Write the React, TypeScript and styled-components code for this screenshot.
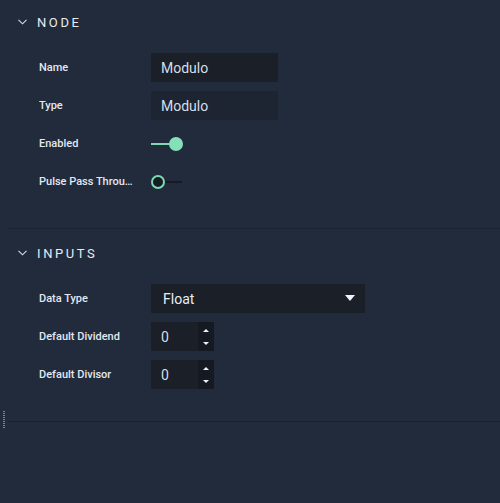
import React from "react";
import styled, { createGlobalStyle } from "styled-components";

const Global = createGlobalStyle`
  html, body { margin: 0; padding: 0; background: #222b3b; }
  body { font-family: Roboto, "Liberation Sans", sans-serif; color: #dfe5ee; }
  * { box-sizing: border-box; }
`;

const Panel = styled.div`
  width: 500px;
  height: 503px;
  background: #222b3b;
  position: relative;
  overflow: hidden;
`;

const Section = styled.section`
  padding-bottom: 32px;
  margin-left: 7px;
  border-bottom: 1px solid #1a2130;
`;

const Header = styled.div<{ $top: number }>`
  display: flex;
  align-items: center;
  height: 16px;
  margin-top: ${(p) => p.$top}px;
  margin-bottom: 23px;
  padding-left: 11px;
  gap: 10px;
`;

const HeaderText = styled.span`
  font-size: 13px;
  font-weight: 400;
  letter-spacing: 2.6px;
  color: #e6ebf2;
`;

const Rows = styled.div`
  display: flex;
  flex-direction: column;
  gap: 9px;
`;

const Row = styled.div`
  display: grid;
  grid-template-columns: 112px 1fr;
  align-items: center;
  height: 29px;
  padding-left: 32px;
`;

const Label = styled.span`
  font-size: 11px;
  font-weight: 500;
  color: #e2e8f0;
  white-space: nowrap;
  overflow: hidden;
  text-overflow: ellipsis;
  max-width: 95px;
`;

const TextBox = styled.div<{ $readonly?: boolean }>`
  width: 127px;
  height: 29px;
  background: ${(p) => (p.$readonly ? "#1e2532" : "#1a1f28")};
  display: flex;
  align-items: center;
  padding-left: 10px;
  font-size: 14px;
  color: #d6deea;
`;

const Toggle = styled.div`
  position: relative;
  width: 32px;
  height: 14px;
`;

const Track = styled.div<{ $on: boolean }>`
  position: absolute;
  left: 0;
  top: 6px;
  width: 31px;
  height: 2px;
  background: ${(p) => (p.$on ? "#7ed9b3" : "#151b25")};
`;

const Knob = styled.div<{ $on: boolean }>`
  position: absolute;
  top: 0;
  left: ${(p) => (p.$on ? "18px" : "0px")};
  width: 14px;
  height: 14px;
  border-radius: 50%;
  background: ${(p) => (p.$on ? "#84e0b9" : "#161c26")};
  border: ${(p) => (p.$on ? "none" : "2px solid #7ed9b3")};
`;

const Select = styled.div`
  width: 214px;
  height: 29px;
  background: #1a1f28;
  display: flex;
  align-items: center;
  justify-content: space-between;
  padding: 0 10px 0 12px;
  font-size: 14px;
  color: #e8edf4;
`;

const Caret = styled.span`
  width: 0;
  height: 0;
  border-left: 5px solid transparent;
  border-right: 5px solid transparent;
  border-top: 6px solid #f2f4f8;
  margin-top: -1px;
`;

const NumBox = styled.div`
  width: 63px;
  height: 29px;
  background: #1a1f28;
  display: flex;
  align-items: stretch;
`;

const NumValue = styled.div`
  flex: 1;
  display: flex;
  align-items: center;
  padding-left: 10px;
  font-size: 14px;
  color: #d6deea;
`;

const Spinner = styled.div`
  width: 16px;
  background: #151a22;
  display: flex;
  flex-direction: column;
  align-items: center;
  justify-content: center;
  gap: 10px;
`;

const Arrow = styled.span<{ $up?: boolean }>`
  width: 0;
  height: 0;
  border-left: 3px solid transparent;
  border-right: 3px solid transparent;
  ${(p) =>
    p.$up
      ? "border-bottom: 3px solid #eef1f6;"
      : "border-top: 3px solid #eef1f6;"}
`;

const Grip = styled.div`
  position: absolute;
  left: 3px;
  top: 411px;
  width: 2px;
  height: 17px;
  background: repeating-linear-gradient(
    to bottom,
    #7a8494 0px,
    #7a8494 1px,
    transparent 1px,
    transparent 2px
  );
`;

const Chevron = () => (
  <svg width="9" height="6" viewBox="0 0 9 6">
    <path d="M0.5 0.8 L4.5 4.8 L8.5 0.8" fill="none" stroke="#d6dde8" strokeWidth="1.1" />
  </svg>
);

const NumberInput = ({ value }: { value: string }) => (
  <NumBox>
    <NumValue>{value}</NumValue>
    <Spinner>
      <Arrow $up />
      <Arrow />
    </Spinner>
  </NumBox>
);

const Switch = ({ on }: { on: boolean }) => (
  <Toggle>
    <Track $on={on} />
    <Knob $on={on} />
  </Toggle>
);

export default function App() {
  return (
    <Panel>
      <Global />
      <Section>
        <Header $top={14}>
          <Chevron />
          <HeaderText>NODE</HeaderText>
        </Header>
        <Rows>
          <Row>
            <Label>Name</Label>
            <TextBox>Modulo</TextBox>
          </Row>
          <Row>
            <Label>Type</Label>
            <TextBox $readonly>Modulo</TextBox>
          </Row>
          <Row>
            <Label>Enabled</Label>
            <Switch on />
          </Row>
          <Row>
            <Label>Pulse Pass Through</Label>
            <Switch on={false} />
          </Row>
        </Rows>
      </Section>
      <Section>
        <Header $top={16}>
          <Chevron />
          <HeaderText>INPUTS</HeaderText>
        </Header>
        <Rows>
          <Row>
            <Label>Data Type</Label>
            <Select>
              <span>Float</span>
              <Caret />
            </Select>
          </Row>
          <Row>
            <Label>Default Dividend</Label>
            <NumberInput value="0" />
          </Row>
          <Row>
            <Label>Default Divisor</Label>
            <NumberInput value="0" />
          </Row>
        </Rows>
      </Section>
      <Grip />
    </Panel>
  );
}
